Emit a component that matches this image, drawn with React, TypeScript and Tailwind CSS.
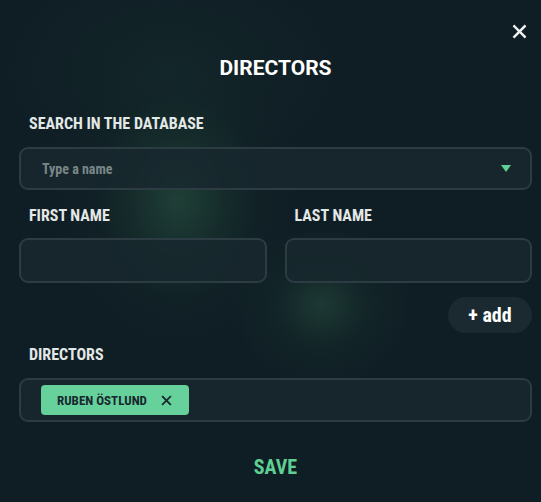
import React from "react";

const font = { fontFamily: "Roboto, 'Liberation Sans', sans-serif" };

function CloseIcon({ className }: { className?: string }) {
  return (
    <svg viewBox="0 0 16 16" className={className} fill="none" stroke="currentColor" strokeWidth={2.6} strokeLinecap="square">
      <path d="M2.5 2.5l11 11M13.5 2.5l-11 11" />
    </svg>
  );
}

export default function App() {
  return (
    <div
      className="relative w-[541px] h-[502px] overflow-hidden bg-[#0f1e25] text-white [font-stretch:condensed]"
      style={font}
    >
      {/* soft green glows */}
      <div className="pointer-events-none absolute inset-0 bg-[radial-gradient(ellipse_120px_150px_at_178px_200px,rgba(38,78,62,0.7)_0%,rgba(30,62,52,0.4)_40%,rgba(22,44,40,0.15)_70%,transparent_100%),radial-gradient(ellipse_90px_80px_at_322px_305px,rgba(38,76,62,0.6)_0%,rgba(28,56,48,0.25)_50%,transparent_100%),radial-gradient(ellipse_170px_110px_at_170px_70px,rgba(30,60,52,0.25)_0%,transparent_100%)]" />

      <div className="relative flex flex-col pl-[19px] pr-[9px] pt-[24px]">
        <div className="flex justify-end">
          <button className="text-[#eef2f1] mr-[5px] flex items-center justify-center">
            <CloseIcon className="w-[15px] h-[15px]" />
          </button>
        </div>

        <h1 className="mt-[19px] text-center text-[21px] font-bold leading-none [font-stretch:normal]">DIRECTORS</h1>

        <label className="mt-[37px] ml-[10px] text-[16px] font-bold text-[#e3e8e6] leading-none">SEARCH IN THE DATABASE</label>
        <div className="mt-[15px] h-[43px] rounded-[9px] border-2 border-[#2c3c42] bg-[#18282e]/80 flex items-center justify-between pl-[21px] pr-[19px]">
          <span className="text-[14px] font-bold text-[#7a8789] leading-none">Type a name</span>
          <svg viewBox="0 0 10 7" className="w-[10px] h-[7px] text-[#5fcf93]" fill="currentColor">
            <path d="M0 0h10L5 7z" />
          </svg>
        </div>

        <div className="mt-[18px] grid grid-cols-2 gap-[18px]">
          <div className="flex flex-col">
            <label className="ml-[10px] text-[16px] font-bold text-[#e3e8e6] leading-none">FIRST NAME</label>
            <div className="mt-[14px] h-[45px] rounded-[9px] border-2 border-[#2c3c42] bg-[#18282e]/80" />
          </div>
          <div className="flex flex-col">
            <label className="ml-[10px] text-[16px] font-bold text-[#e3e8e6] leading-none">LAST NAME</label>
            <div className="mt-[14px] h-[45px] rounded-[9px] border-2 border-[#2c3c42] bg-[#18282e]/80" />
          </div>
        </div>

        <div className="mt-[14px] flex justify-end">
          <button className="h-[36px] w-[84px] rounded-full bg-[#1b2a31] text-[20px] font-bold text-white leading-none">
            + add
          </button>
        </div>

        <label className="mt-[14px] ml-[10px] text-[16px] font-bold text-[#e3e8e6] leading-none">DIRECTORS</label>
        <div className="mt-[15px] h-[44px] rounded-[9px] border-2 border-[#2c3c42] bg-[#18282e]/80 flex items-center pl-[20px]">
          <div className="h-[30px] w-[148px] rounded-[4px] bg-[#66d19a] flex items-center pl-[16px] gap-[14px] text-[#18282f]">
            <span className="text-[13px] font-bold leading-none">RUBEN ÖSTLUND</span>
            <CloseIcon className="w-[11px] h-[11px]" />
          </div>
        </div>

        <button className="mt-[35px] self-center text-[20px] font-bold text-[#5fcf93] leading-none">SAVE</button>
      </div>
    </div>
  );
}
